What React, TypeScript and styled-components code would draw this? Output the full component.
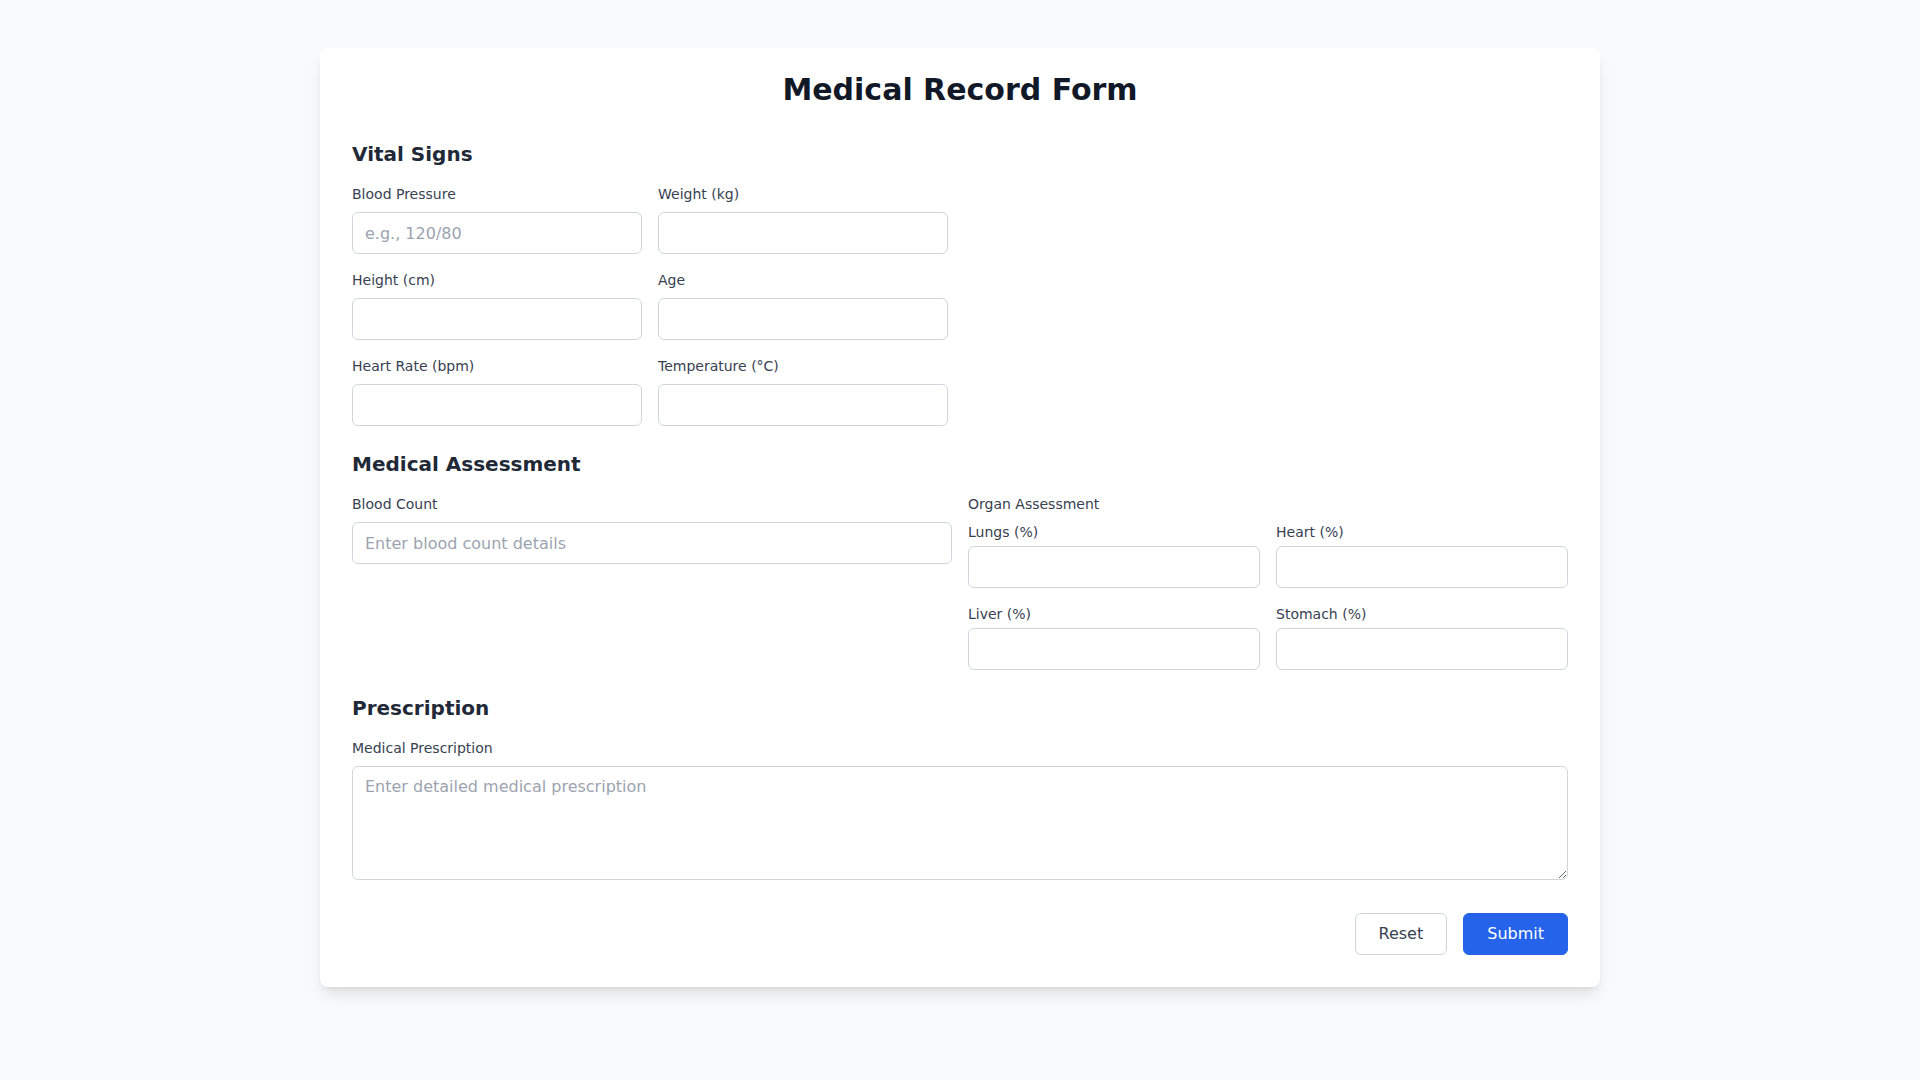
import styled, { createGlobalStyle } from "styled-components";

const GlobalStyle = createGlobalStyle`
  * {
    box-sizing: border-box;
  }
  body {
    margin: 0;
    background: #f9fafb;
    font-family: "DejaVu Sans", "Noto Sans", sans-serif;
    color: #111827;
  }
`;

const Page = styled.div`
  min-height: 100vh;
  padding: 48px 0;
`;

const Card = styled.form`
  max-width: 1280px;
  margin: 0 auto;
  padding: 24px 32px 32px;
  background: #ffffff;
  border-radius: 8px;
  box-shadow: 0 10px 15px -3px rgba(0, 0, 0, 0.1),
    0 4px 6px -4px rgba(0, 0, 0, 0.1);
`;

const Title = styled.h1`
  margin: 0 0 32px;
  font-size: 30px;
  line-height: 36px;
  font-weight: 700;
  text-align: center;
  color: #111827;
`;

const Section = styled.section`
  margin-bottom: 24px;
`;

const SectionTitle = styled.h2`
  margin: 0 0 16px;
  font-size: 20px;
  line-height: 28px;
  font-weight: 700;
  color: #1f2937;
`;

const FieldGrid = styled.div<{ $half?: boolean }>`
  display: grid;
  grid-template-columns: repeat(2, 1fr);
  gap: 16px;
  width: ${(p) => (p.$half ? "calc(50% - 12px)" : "100%")};
`;

const Field = styled.div`
  display: flex;
  flex-direction: column;
`;

const Label = styled.label<{ $tight?: boolean }>`
  display: block;
  margin-bottom: ${(p) => (p.$tight ? "4px" : "8px")};
  font-size: 14px;
  line-height: 20px;
  color: #374151;
`;

const Input = styled.input`
  width: 100%;
  height: 42px;
  padding: 8px 12px;
  border: 1px solid #d1d5db;
  border-radius: 6px;
  font-family: inherit;
  font-size: 16px;
  line-height: 24px;
  color: #111827;
  background: #fff;
  outline: none;
  &::placeholder {
    color: #9ca3af;
  }
`;

const TextArea = styled.textarea`
  display: block;
  width: 100%;
  height: 114px;
  padding: 8px 12px;
  border: 1px solid #d1d5db;
  border-radius: 6px;
  font-family: inherit;
  font-size: 16px;
  line-height: 24px;
  color: #111827;
  resize: vertical;
  outline: none;
  &::placeholder {
    color: #9ca3af;
  }
`;

const Actions = styled.div`
  display: flex;
  justify-content: flex-end;
  gap: 16px;
  padding-top: 9px;
`;

const Button = styled.button<{ $primary?: boolean }>`
  height: 42px;
  padding: 8px 23px;
  border-radius: 6px;
  font-family: inherit;
  font-size: 16px;
  line-height: 24px;
  cursor: pointer;
  border: 1px solid ${(p) => (p.$primary ? "#2563eb" : "#d1d5db")};
  background: ${(p) => (p.$primary ? "#2563eb" : "#ffffff")};
  color: ${(p) => (p.$primary ? "#ffffff" : "#374151")};
`;

type FieldDef = { label: string; placeholder?: string };

const vitals: FieldDef[] = [
  { label: "Blood Pressure", placeholder: "e.g., 120/80" },
  { label: "Weight (kg)" },
  { label: "Height (cm)" },
  { label: "Age" },
  { label: "Heart Rate (bpm)" },
  { label: "Temperature (°C)" },
];

const organs: FieldDef[] = [
  { label: "Lungs (%)" },
  { label: "Heart (%)" },
  { label: "Liver (%)" },
  { label: "Stomach (%)" },
];

const App = () => {
  return (
    <>
      <GlobalStyle />
      <Page>
        <Card onSubmit={(e) => e.preventDefault()}>
          <Title>Medical Record Form</Title>

          <Section>
            <SectionTitle>Vital Signs</SectionTitle>
            <FieldGrid $half>
              {vitals.map((f) => (
                <Field key={f.label}>
                  <Label>{f.label}</Label>
                  <Input type="text" placeholder={f.placeholder} />
                </Field>
              ))}
            </FieldGrid>
          </Section>

          <Section>
            <SectionTitle>Medical Assessment</SectionTitle>
            <FieldGrid>
              <div>
                <Label>Blood Count</Label>
                <Input type="text" placeholder="Enter blood count details" />
              </div>
              <div>
                <Label>Organ Assessment</Label>
                <FieldGrid>
                  {organs.map((f) => (
                    <Field key={f.label}>
                      <Label $tight>{f.label}</Label>
                      <Input type="number" />
                    </Field>
                  ))}
                </FieldGrid>
              </div>
            </FieldGrid>
          </Section>

          <Section>
            <SectionTitle>Prescription</SectionTitle>
            <Label>Medical Prescription</Label>
            <TextArea rows={4} placeholder="Enter detailed medical prescription" />
          </Section>

          <Actions>
            <Button type="reset">Reset</Button>
            <Button type="submit" $primary>
              Submit
            </Button>
          </Actions>
        </Card>
      </Page>
    </>
  );
};

export default App;
